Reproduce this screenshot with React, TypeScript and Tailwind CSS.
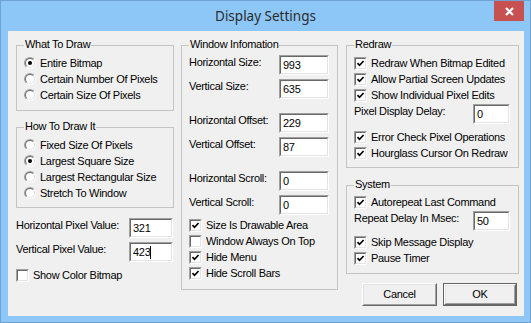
import type { ReactNode } from 'react'

// Win8-style "Display Settings" dialog: light blue frame, classic 3D controls.

function Sunken({ className, children }: { className: string; children?: ReactNode }) {
  return (
    <div className={`border border-t-[#a0a0a0] border-l-[#a0a0a0] border-b-white border-r-white ${className}`}>
      <div className="w-full h-full border border-t-[#696969] border-l-[#696969] border-b-[#e3e3e3] border-r-[#e3e3e3] bg-white flex items-center">
        {children}
      </div>
    </div>
  )
}

function Group({ label, className, children }: { label: string; className: string; children: ReactNode }) {
  return (
    <div className={`relative border border-[#c4c4c4] ${className}`}>
      <span className="absolute left-[7px] top-[-8px] px-[1px] bg-[#f0f0f0] leading-[13px]">{label}</span>
      {children}
    </div>
  )
}

function Radio({ label, checked = false }: { label: string; checked?: boolean }) {
  return (
    <div className="h-[16px] flex items-center gap-[4px]">
      <div className="w-[12px] h-[12px] rounded-full border border-t-[#a0a0a0] border-l-[#a0a0a0] border-b-white border-r-white">
        <div className="w-full h-full rounded-full border border-t-[#696969] border-l-[#696969] border-b-[#e3e3e3] border-r-[#e3e3e3] bg-white flex items-center justify-center">
          {checked && <div className="w-[4px] h-[4px] rounded-full bg-black" />}
        </div>
      </div>
      <span className="leading-[13px]">{label}</span>
    </div>
  )
}

function Check({ label, checked = false }: { label: string; checked?: boolean }) {
  return (
    <div className="h-[16px] flex items-center gap-[4px]">
      <Sunken className="w-[13px] h-[13px] shrink-0">
        {checked && (
          <svg width="9" height="9" viewBox="0 0 9 9" className="mx-auto">
            <polyline points="1.5,4.2 3.5,6.3 7.6,2" fill="none" stroke="#000" strokeWidth="1.7" />
          </svg>
        )}
      </Sunken>
      <span className="leading-[13px]">{label}</span>
    </div>
  )
}

function Field({
  label,
  value,
  inputW,
  caret = false,
  className = '',
}: {
  label: string
  value: string
  inputW: string
  caret?: boolean
  className?: string
}) {
  return (
    <div className={`flex items-start justify-between ${className}`}>
      <span className="pt-[1px] leading-[13px]">{label}</span>
      <Sunken className={`${inputW} h-[20px]`}>
        <span className="pl-[2px] leading-[13px]">{value}</span>
        {caret && <span className="w-[1px] h-[13px] bg-black" />}
      </Sunken>
    </div>
  )
}

function Button({ label, isDefault = false }: { label: string; isDefault?: boolean }) {
  const inner = (
    <div className="w-full h-full border border-t-white border-l-white border-b-[#696969] border-r-[#696969]">
      <div className="w-full h-full border border-t-[#e3e3e3] border-l-[#e3e3e3] border-b-[#a0a0a0] border-r-[#a0a0a0] bg-[#f0f0f0] flex items-center justify-center">
        <span className="leading-[13px]">{label}</span>
      </div>
    </div>
  )
  return isDefault ? (
    <div className="w-[74px] h-[23px] border border-[#646464]">{inner}</div>
  ) : (
    <div className="w-[75px] h-[23px]">{inner}</div>
  )
}

export default function App() {
  return (
    <div className="w-[531px] h-[323px] bg-[#8cc7f7] border border-[#6fa3d3] flex flex-col font-['Liberation_Sans',Arial,sans-serif] text-[11px] tracking-[-0.3px] text-black">
      {/* title bar */}
      <div className="relative h-[30px] shrink-0 flex items-center justify-center">
        <span className="font-['Noto_Sans',sans-serif] text-[13.5px] tracking-normal text-[#2b2b2b]">Display Settings</span>
        <div className="absolute right-[6px] top-0 w-[30px] h-[20px] bg-[#c75050] flex items-center justify-center">
          <svg width="9" height="9" viewBox="0 0 9 9">
            <path d="M1 1L8 8M8 1L1 8" stroke="#fff" strokeWidth="2.2" />
          </svg>
        </div>
      </div>

      {/* client area */}
      <div className="flex-1 ml-[7px] mr-[6px] mb-[6px] bg-[#f0f0f0] pl-[8px] pt-[14px] flex gap-[7px]">
        {/* left column */}
        <div className="w-[158px] flex flex-col">
          <Group label="What To Draw" className="pl-[7px] pt-[9px] pb-[7px]">
            <Radio label="Entire Bitmap" checked />
            <Radio label="Certain Number Of Pixels" />
            <Radio label="Certain Size Of Pixels" />
          </Group>
          <Group label="How To Draw It" className="mt-[16px] pl-[7px] pt-[9px] pb-[6px]">
            <Radio label="Fixed Size Of Pixels" />
            <Radio label="Largest Square Size" checked />
            <Radio label="Largest Rectangular Size" />
            <Radio label="Stretch To Window" />
          </Group>
          <Field className="mt-[10px] pr-[1px]" label="Horizontal Pixel Value:" value="321" inputW="w-[44px]" />
          <Field className="mt-[4px] pr-[1px]" label="Vertical Pixel Value:" value="423" inputW="w-[44px]" caret />
          <div className="mt-[5px]">
            <Check label="Show Color Bitmap" />
          </div>
        </div>

        {/* middle column */}
        <div className="w-[157px] flex flex-col">
          <Group label="Window Infomation" className="pl-[7px] pr-[8px] pt-[9px] pb-[8px] flex flex-col">
            <Field label="Horizontal Size:" value="993" inputW="w-[50px]" />
            <Field className="mt-[4px]" label="Vertical Size:" value="635" inputW="w-[50px]" />
            <Field className="mt-[14px]" label="Horizontal Offset:" value="229" inputW="w-[50px]" />
            <Field className="mt-[4px]" label="Vertical Offset:" value="87" inputW="w-[50px]" />
            <Field className="mt-[14px]" label="Horizontal Scroll:" value="0" inputW="w-[50px]" />
            <Field className="mt-[4px]" label="Vertical Scroll:" value="0" inputW="w-[50px]" />
            <div className="mt-[2px]">
              <Check label="Size Is Drawable Area" checked />
              <Check label="Window Always On Top" />
              <Check label="Hide Menu" checked />
              <Check label="Hide Scroll Bars" checked />
            </div>
          </Group>
        </div>

        {/* right column */}
        <div className="w-[173px] ml-[1px] flex flex-col">
          <Group label="Redraw" className="pl-[7px] pr-[8px] pt-[9px] pb-[6px] flex flex-col">
            <Check label="Redraw When Bitmap Edited" checked />
            <Check label="Allow Partial Screen Updates" checked />
            <Check label="Show Individual Pixel Edits" checked />
            <Field className="mt-[1px]" label="Pixel Display Delay:" value="0" inputW="w-[37px]" />
            <div className="mt-[5px]">
              <Check label="Error Check Pixel Operations" checked />
              <Check label="Hourglass Cursor On Redraw" checked />
            </div>
          </Group>
          <Group label="System" className="mt-[17px] pl-[7px] pr-[8px] pt-[8px] pb-[7px] flex flex-col">
            <Check label="Autorepeat Last Command" checked />
            <Field className="mt-[1px]" label="Repeat Delay In Msec:" value="50" inputW="w-[37px]" />
            <div className="mt-[3px]">
              <Check label="Skip Message Display" checked />
              <Check label="Pause Timer" checked />
            </div>
          </Group>
          <div className="mt-[9px] pl-[16px] flex gap-[6px]">
            <Button label="Cancel" />
            <Button label="OK" isDefault />
          </div>
        </div>
      </div>
    </div>
  )
}
